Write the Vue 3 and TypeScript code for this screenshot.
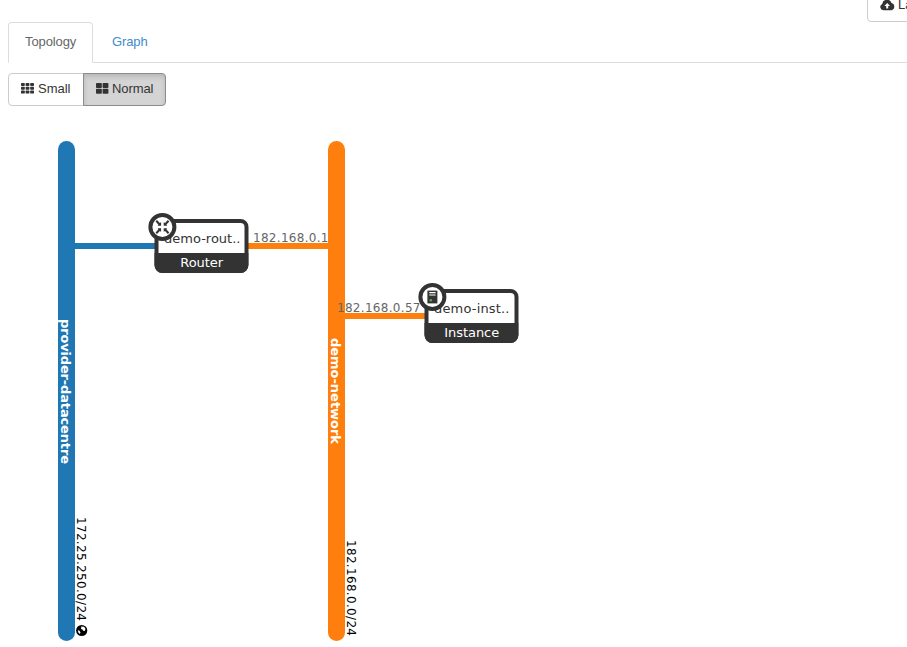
<script setup lang="ts">
import { ref } from 'vue'

interface Network { x: number; color: string; name: string; nameY: number; nameLen: number; cidr: string; cidrY: number; cidrLen: number; external: boolean }
interface Device { x: number; y: number; name: string; nameLen: number; kind: string; kindLen: number; icon: 'router' | 'server' }
interface Port { x: number; y: number; width: number; color: string; ip?: string; ipX?: number; ipLen?: number }

const size = ref<'small' | 'normal'>('normal')
const tab = ref<'Topology' | 'Graph'>('Topology')
const tabs = ['Topology', 'Graph'] as const
const blue = '#1f77b4'
const orange = '#ff7f0e'

const networks: Network[] = [
  { x: 58, color: blue, name: 'provider-datacentre', nameY: 319, nameLen: 145, cidr: '172.25.250.0/24', cidrY: 517, cidrLen: 104, external: true },
  { x: 328, color: orange, name: 'demo-network', nameY: 338, nameLen: 106, cidr: '182.168.0.0/24', cidrY: 540, cidrLen: 96, external: false },
]
const ports: Port[] = [
  { x: 75, y: 243, width: 82, color: blue },
  { x: 247, y: 243, width: 81, color: orange, ip: '182.168.0.1', ipX: 253, ipLen: 75.5 },
  { x: 345, y: 313, width: 82, color: orange, ip: '182.168.0.57', ipX: 337, ipLen: 83.5 },
]
const devices: Device[] = [
  { x: 155, y: 219, name: 'demo-rout..', nameLen: 76.5, kind: 'Router', kindLen: 43, icon: 'router' },
  { x: 425, y: 289, name: 'demo-inst..', nameLen: 75.5, kind: 'Instance', kindLen: 55, icon: 'server' },
]
</script>

<template>
  <main class="page">
    <div class="actions">
      <button class="btn launch">
        <svg class="cloud" width="15" height="12" viewBox="0 0 15 12">
          <path d="M3.4 11.2A3.3 3.3 0 0 1 2.2 4.9 4.8 4.8 0 0 1 11.5 4 3.7 3.7 0 0 1 11.4 11.2Z" fill="#333" />
          <path d="M7.2 3.9 10 7H8.2v2.4h-2V7H4.4Z" fill="#fff" />
        </svg>
        <span>Launch Instance</span>
      </button>
    </div>
    <nav class="tabs">
      <a v-for="item in tabs" :key="item" class="tab" :class="{ active: tab === item }" @click="tab = item">{{ item }}</a>
    </nav>
    <div class="sizes">
      <button class="btn first" :class="{ pressed: size === 'small' }" @click="size = 'small'">
        <svg width="13" height="11" viewBox="0 0 13 11" fill="#333">
          <template v-for="cx in [0, 4.6, 9.2]" :key="cx">
            <rect v-for="cy in [0, 3.8, 7.6]" :key="cy" :x="cx" :y="cy" width="3.8" height="3" rx=".7" />
          </template>
        </svg>
        <span>Small</span>
      </button>
      <button class="btn last" :class="{ pressed: size === 'normal' }" @click="size = 'normal'">
        <svg width="13" height="11" viewBox="0 0 13 11" fill="#333">
          <rect width="5.8" height="5" rx=".8" /><rect x="6.6" width="5.8" height="5" rx=".8" />
          <rect y="5.8" width="5.8" height="5" rx=".8" /><rect x="6.6" y="5.8" width="5.8" height="5" rx=".8" />
        </svg>
        <span>Normal</span>
      </button>
    </div>
    <svg class="topology" width="907" height="541" viewBox="0 106 907 541">
      <g v-for="net in networks" :key="net.name">
        <rect :x="net.x" y="141" width="17" height="500" rx="8.5" :fill="net.color" />
        <text class="net-name" :transform="`translate(${net.x + 2.5} ${net.nameY}) rotate(90)`" :textLength="net.nameLen">{{ net.name }}</text>
        <text class="cidr" :transform="`translate(${net.x + 19} ${net.cidrY}) rotate(90)`" :textLength="net.cidrLen">{{ net.cidr }}</text>
        <g v-if="net.external" :transform="`translate(${net.x + 23.7} 630.5)`">
          <circle r="5.6" fill="#000" />
          <path d="M-.6-4.1 2.4-3.7 3.8-1.7 3.1.6 1.5.2.5-1.2-.9-1.4-.4-2.8ZM-3.9-.2-2.2.3-1.2 2-1.9 3.4-3.4 2Z" fill="#fff" />
        </g>
      </g>
      <g v-for="port in ports" :key="port.x">
        <rect :x="port.x" :y="port.y" :width="port.width" height="6" :fill="port.color" />
        <text v-if="port.ip" class="ip" :x="port.ipX" :y="port.y - 1" :textLength="port.ipLen">{{ port.ip }}</text>
      </g>
      <g v-for="device in devices" :key="device.name" :transform="`translate(${device.x} ${device.y})`">
        <rect x="1.5" y="2" width="90" height="50" rx="6" fill="#fff" stroke="#333" stroke-width="4" />
        <path d="M-.5 34H93.3V46a8 8 0 0 1-8 8H7.5A8 8 0 0 1-.5 46Z" fill="#333" />
        <text class="device-name" x="9" y="24" :textLength="device.nameLen">{{ device.name }}</text>
        <text class="kind" x="46.7" y="48" text-anchor="middle" :textLength="device.kindLen">{{ device.kind }}</text>
        <g transform="translate(7.4 8)">
          <circle r="12" fill="#fff" stroke="#333" stroke-width="4" />
          <g v-if="device.icon === 'router'" fill="#333">
            <path v-for="angle in [0, 90, 180, 270]" :key="angle" :transform="`rotate(${angle})`" d="M1.3 1.3H4.7L4.1 2.6 6.9 5.4 5.4 6.9 2.6 4.1 1.3 4.7Z" />
          </g>
          <g v-else>
            <path d="M-5-6.4H5V6.4H-5Z" fill="#333" />
            <path d="M-3.1-4.9H3.2V-3.7H-3.1ZM-3.1-2.4H3.2V-1.5H-3.1Z" fill="#fff" />
            <circle cx="-1.6" cy="3.2" r="1.3" fill="#4caf50" />
          </g>
        </g>
      </g>
    </svg>
  </main>
</template>

<style>
body { margin: 0; overflow: hidden; background: #fff; }
</style>
<style scoped>
.page { width: 907px; height: 647px; overflow: hidden; font: 13px/18px "Liberation Sans", Arial, sans-serif; color: #333; }
.actions { height: 22px; display: flex; align-items: flex-end; padding-left: 867px; }
.btn { box-sizing: border-box; height: 33px; display: flex; align-items: center; gap: 4px; padding: 0 12px 2px; border: 1px solid #ccc; border-radius: 4px; background: #fff; font: inherit; color: #333; white-space: nowrap; cursor: pointer; }
.btn svg { flex: none; }
.launch { flex: none; padding-bottom: 1px; }
.launch .cloud { margin-right: -1px; }
.tabs { box-sizing: border-box; height: 41px; display: flex; gap: 2px; margin-left: 8px; border-bottom: 1px solid #ddd; }
.tab { box-sizing: border-box; height: 41px; padding: 10px 16px; border: 1px solid transparent; border-radius: 4px 4px 0 0; color: #428bca; letter-spacing: -.1px; cursor: pointer; }
.tab.active { width: 85px; background: #fff; border-color: #ddd; border-bottom-color: #fff; color: #666; }
.sizes { height: 43px; box-sizing: border-box; display: flex; padding: 10px 0 0 8px; }
.first { width: 76px; border-radius: 4px 0 0 4px; }
.last { width: 83px; margin-left: -1px; border-radius: 0 4px 4px 0; }
.sizes .btn { padding-right: 0; }
.sizes .last { gap: 3px; }
.last span { letter-spacing: -.1px; }
.btn.pressed { background: #d4d4d4; border-color: #8c8c8c; box-shadow: inset 0 3px 5px rgba(0, 0, 0, .125); }
.topology { display: block; font-family: "DejaVu Sans", sans-serif; }
.net-name { font-size: 13px; font-weight: bold; fill: #fff; }
.cidr { font-size: 12px; fill: #000; }
.ip { font-size: 12px; fill: #666; }
.device-name { font-size: 13px; fill: #333; }
.kind { font-size: 13px; fill: #fff; }
</style>
